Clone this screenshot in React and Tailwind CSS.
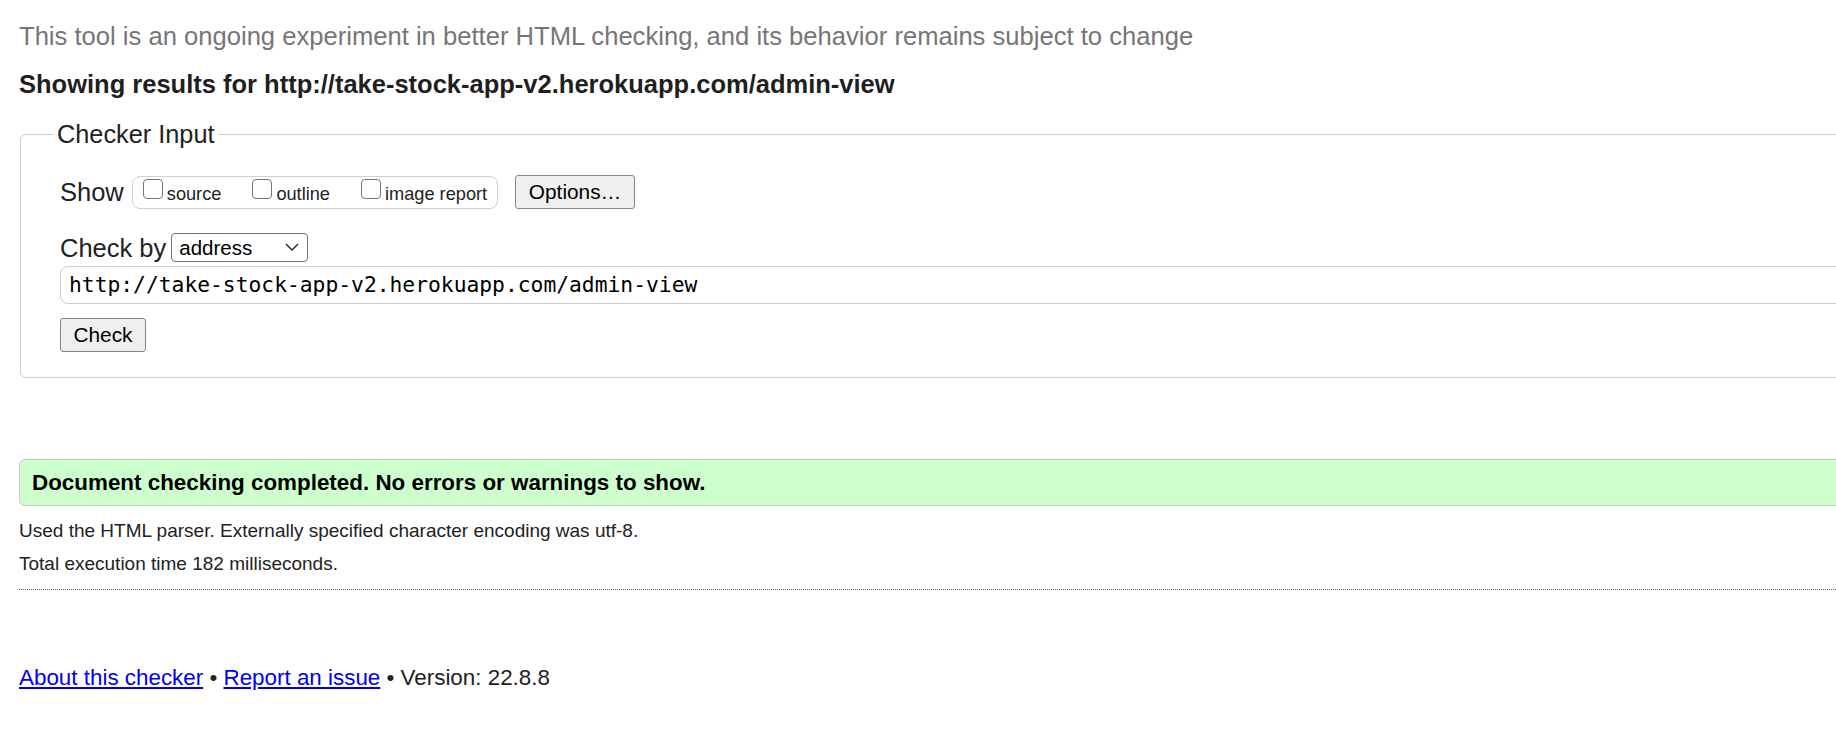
// Nu HTML checker results page, with the form and result boxes running past the right edge
function ShowOption({ label }) {
  return (
    <label className="flex items-end">
      <input
        type="checkbox"
        className="appearance-none w-[20px] h-[20px] mb-[5px] mr-[4px] border border-[#767676] rounded-[4px] bg-white"
      />
      <span className="text-[18.2px] leading-[20px] text-[#222]">{label}</span>
    </label>
  );
}

export default function App() {
  return (
    <div className="w-[1836px] h-[734px] overflow-hidden bg-white font-['Liberation_Sans',Arial,sans-serif] text-[#222]">
      <div className="w-[1960px] pl-[19px]">
        <p className="mt-[22px] text-[25.6px] leading-[28px] text-[#767676]">
          This tool is an ongoing experiment in better HTML checking, and its behavior remains subject to change
        </p>
        <h2 className="mt-[19px] text-[25.5px] leading-[30px] font-bold text-[#1f1f1f]">
          Showing results for http://take-stock-app-v2.herokuapp.com/admin-view
        </h2>

        <fieldset className="mt-[20px] ml-[1px] border border-[#cccccc] rounded-[6px] pl-[33px] pb-[25px]">
          <legend className="px-[3px] text-[25.3px] leading-[30px] text-[#222]">Checker Input</legend>
          <div className="pl-[6px] pt-[26px]">
            <div className="flex items-center">
              <span className="text-[25.5px] leading-[30px] mr-[8px]">Show</span>
              <div className="flex items-end gap-[31px] h-[33px] pl-[10px] pr-[10px] pb-[4px] border border-[#d0d0d0] rounded-[8px]">
                <ShowOption label="source" />
                <ShowOption label="outline" />
                <ShowOption label="image report" />
              </div>
              <button className="ml-[17px] w-[120px] h-[34px] bg-[#efefef] border border-[#858585] rounded-[3px] text-[20.8px] leading-[24px] text-black">
                Options…
              </button>
            </div>

            <div className="mt-[24px] flex items-center h-[29px]">
              <span className="text-[25.5px] leading-[30px] mr-[5px]">Check by</span>
              <div className="relative w-[137px] h-[29px]">
                <select className="appearance-none w-full h-full border border-[#767676] rounded-[4px] bg-white pl-[7px] text-[20.5px] leading-[24px] text-black">
                  <option>address</option>
                </select>
                <svg
                  className="absolute right-[9px] top-[10px] pointer-events-none"
                  width="14"
                  height="8"
                  viewBox="0 0 14 8"
                  fill="none"
                >
                  <polyline points="1,1 7,7 13,1" stroke="#222" strokeWidth="1.4" />
                </svg>
              </div>
            </div>

            <div className="mt-[4px] h-[38px] flex items-center border border-[#cccccc] rounded-[8px] pl-[8px]">
              <span className="font-['DejaVu_Sans_Mono','Liberation_Mono',monospace] text-[21.3px] leading-[26px] text-black">
                http://take-stock-app-v2.herokuapp.com/admin-view
              </span>
            </div>

            <button className="mt-[14px] w-[86px] h-[34px] bg-[#efefef] border border-[#858585] rounded-[3px] text-[20.8px] leading-[24px] text-black">
              Check
            </button>
          </div>
        </fieldset>

        <div className="mt-[81px] h-[47px] flex items-center bg-[#ccffcc] border border-[#c8c8c8] rounded-[6px] pl-[12px]">
          <span className="text-[22.4px] leading-[26px] font-bold text-black">
            Document checking completed. No errors or warnings to show.
          </span>
        </div>

        <p className="mt-[14px] text-[19px] leading-[22px]">
          Used the HTML parser. Externally specified character encoding was utf-8.
        </p>
        <p className="mt-[11px] text-[19px] leading-[22px]">Total execution time 182 milliseconds.</p>
        <div className="mt-[14px] border-t border-dotted border-[#666]" />

        <p className="mt-[75px] text-[22.4px] leading-[26px]">
          <a href="#" className="text-[#0000ee] underline">About this checker</a>
          {" • "}
          <a href="#" className="text-[#0000ee] underline">Report an issue</a>
          {" • Version: 22.8.8"}
        </p>
      </div>
    </div>
  );
}
